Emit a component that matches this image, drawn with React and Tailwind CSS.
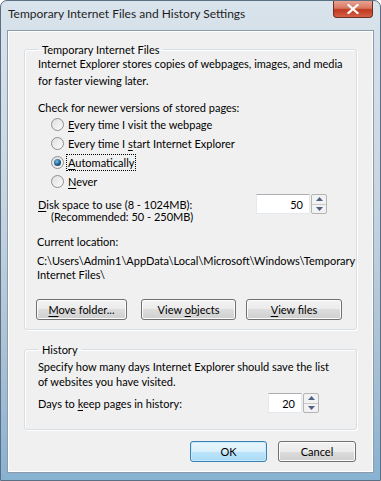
import React from "react";

const U = ({ children }) => <span className="underline underline-offset-2">{children}</span>;

const Radio = ({ checked, children, focus }) => (
  <div className="flex items-center h-[19px]">
    <span className="relative flex items-center justify-center w-[13px] h-[13px] rounded-full border border-[#8f8f8f] bg-gradient-to-br from-[#e0e0e0] to-[#fafafa]">
      {checked && (
        <span className="w-[7px] h-[7px] rounded-full bg-[radial-gradient(circle_at_40%_35%,#6fc0e8,#1c5380_60%,#0e2f50)]" />
      )}
    </span>
    <span className={"ml-[3px] leading-[15px] px-[1px] " + (focus ? "outline-1 outline-dotted outline-black" : "")}>
      {children}
    </span>
  </div>
);

const Button = ({ children, className = "", primary }) => (
  <div
    className={
      "flex items-center justify-center h-[21px] rounded-[3px] border " +
      (primary
        ? "border-[#3c7fb1] bg-[linear-gradient(#eaf6fd_0%,#d9f0fc_50%,#bee6fd_50%,#a7d9f5_100%)] shadow-[inset_0_0_0_1px_#c6e9fb] "
        : "border-[#707070] bg-[linear-gradient(#f2f2f2_0%,#ebebeb_50%,#dddddd_50%,#cfcfcf_100%)] shadow-[inset_0_0_0_1px_#fcfcfc] ") +
      className
    }
  >
    <span>{children}</span>
  </div>
);

// edit box with a separate up/down control, as Vista draws it
const Spin = ({ value, className = "" }) => (
  <div className={"flex h-[20px] " + className}>
    <div className="flex-1 flex items-center justify-end pr-[6px] bg-white border border-[#e3e9ef] border-t-[#abadb3]">
      {value}
    </div>
    <div className="flex flex-col w-[16px] ml-[1px] border border-[#b4b4b4] rounded-[2px] bg-[#f2f2f2]">
      <div className="flex-1 flex items-center justify-center border-b border-[#c9c9c9]">
        <svg width="7" height="4" viewBox="0 0 7 4"><path d="M3.5 0 L7 4 L0 4 Z" fill="#4d6185" /></svg>
      </div>
      <div className="flex-1 flex items-center justify-center">
        <svg width="7" height="4" viewBox="0 0 7 4"><path d="M0 0 L7 0 L3.5 4 Z" fill="#4d6185" /></svg>
      </div>
    </div>
  </div>
);

const Group = ({ title, children, className = "" }) => (
  <fieldset className={"min-w-0 border border-[#d5dfe5] rounded-[3px] shadow-[inset_1px_1px_0_#fff,1px_1px_0_#fff] px-[12px] " + className}>
    <legend className="ml-[1px] px-[4px] leading-[15px]">{title}</legend>
    {children}
  </fieldset>
);

export default function App() {
  return (
    <div
      className="w-[381px] h-[481px] rounded-t-[7px] bg-[linear-gradient(180deg,#d9e3ec_0%,#c9d6e2_40%,#a9c0d4_75%,#88b2d2_100%)] border border-[#5a6f83] flex flex-col text-[#000] text-[11px]"
      style={{ fontFamily: 'Lato, "Noto Sans", sans-serif' }}
    >
      <div className="h-[29px] flex items-start">
        <span className="ml-[7px] mt-[4px] text-[12px] text-[#1e1e1e]">Temporary Internet Files and History Settings</span>
        <div className="ml-auto mr-[7px] w-[40px] h-[17px] rounded-b-[4px] border border-t-0 border-[#6e2f25] bg-[linear-gradient(#e8a394_0%,#d8765f_45%,#c1371d_55%,#d2624a_100%)] flex items-center justify-center">
          <svg width="12" height="10" viewBox="0 0 12 10">
            <path d="M1.5 1 L10.5 9 M10.5 1 L1.5 9" stroke="#fff" strokeWidth="2.2" strokeLinecap="square" />
          </svg>
        </div>
      </div>
      <div className="mx-[6px] mb-[7px] flex-1 bg-[#f0f0f0] border border-[#8a9bab] shadow-[inset_0_0_0_1px_#fff] px-[16px] pt-[11px] leading-[15px]">
        <Group title="Temporary Internet Files" className="pb-[9px]">
          <p className="-mt-[2px] pl-[1px] leading-[17px]">
            Internet Explorer stores copies of webpages, images, and media for faster viewing later.
          </p>
          <p className="mt-[11px] pl-[1px]">Check for newer versions of stored pages:</p>
          <div className="pl-[14px]">
            <Radio><U>E</U>very time I visit the webpage</Radio>
            <Radio>Every time I <U>s</U>tart Internet Explorer</Radio>
            <Radio checked focus><U>A</U>utomatically</Radio>
            <Radio><U>N</U>ever</Radio>
          </div>
          <div className="mt-[3px] flex items-start pl-[1px]">
            <div className="leading-[12px] pt-[5px]">
              <div><U>D</U>isk space to use (8 - 1024MB):</div>
              <div className="pl-[13px]">(Recommended: 50 - 250MB)</div>
            </div>
            <Spin value="50" className="ml-auto mr-[17px] w-[71px]" />
          </div>
          <p className="mt-[11px]">Current location:</p>
          <p className="mt-[5px] leading-[14px]">
            C:\Users\Admin1\AppData\Local\Microsoft\Windows\Temporary Internet Files\
          </p>
          <div className="mt-[17px] flex pr-[2px]">
            <Button className="w-[91px] -ml-[1px]"><U>M</U>ove folder...</Button>
            <Button className="w-[95px] ml-[14px]">View <U>o</U>bjects</Button>
            <Button className="w-[96px] ml-[10px]"><U>V</U>iew files</Button>
          </div>
        </Group>
        <Group title="History" className="mt-[12px] pb-[16px]">
          <p className="pt-[2px] pl-[1px] max-w-[300px] leading-[15px]">
            Specify how many days Internet Explorer should save the list of websites you have visited.
          </p>
          <div className="mt-[4px] flex items-center pl-[1px]">
            <span>Days to <U>k</U>eep pages in history:</span>
            <Spin value="20" className="ml-auto mr-[25px] w-[51px]" />
          </div>
        </Group>
        <div className="mt-[11px] flex justify-end gap-[11px] pr-[1px]">
          <Button primary className="w-[77px]">OK</Button>
          <Button className="w-[78px]">Cancel</Button>
        </div>
      </div>
    </div>
  );
}
